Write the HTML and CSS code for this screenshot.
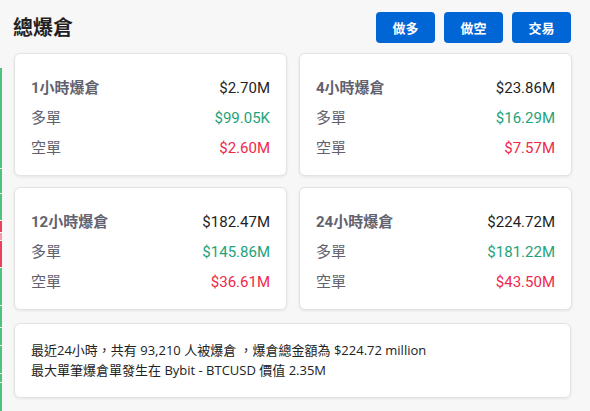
FILE: index.html
```html
<!DOCTYPE html>
<html lang="zh-Hant">
<head>
<meta charset="utf-8">
<title>總爆倉</title>
<link rel="stylesheet" href="styles.css">
</head>
<body>
<div class="edge">
  <span class="seg g" style="height:100px"></span>
  <span class="seg g" style="height:24px"></span>
  <span class="seg g" style="height:26px"></span>
  <span class="seg r" style="height:11px"></span>
  <span class="seg p" style="height:7px"></span>
  <span class="seg r" style="height:26px"></span>
  <span class="seg g" style="height:37px"></span>
  <span class="seg g" style="height:21px"></span>
  <span class="seg g" style="height:17px"></span>
  <span class="seg g" style="height:27px"></span>
  <span class="seg g" style="height:8px"></span>
  <span class="seg g" style="height:28px"></span>
</div>
<div class="page">
  <header class="header">
    <h1 class="title">總爆倉</h1>
    <div class="actions">
      <button class="btn">做多</button>
      <button class="btn">做空</button>
      <button class="btn">交易</button>
    </div>
  </header>
  <section class="grid">
    <div class="card">
      <div class="row"><span class="label strong">1小時爆倉</span><span class="val">$2.70M</span></div>
      <div class="row"><span class="label">多單</span><span class="val up">$99.05K</span></div>
      <div class="row"><span class="label">空單</span><span class="val down">$2.60M</span></div>
    </div>
    <div class="card">
      <div class="row"><span class="label strong">4小時爆倉</span><span class="val">$23.86M</span></div>
      <div class="row"><span class="label">多單</span><span class="val up">$16.29M</span></div>
      <div class="row"><span class="label">空單</span><span class="val down">$7.57M</span></div>
    </div>
    <div class="card">
      <div class="row"><span class="label strong">12小時爆倉</span><span class="val">$182.47M</span></div>
      <div class="row"><span class="label">多單</span><span class="val up">$145.86M</span></div>
      <div class="row"><span class="label">空單</span><span class="val down">$36.61M</span></div>
    </div>
    <div class="card">
      <div class="row"><span class="label strong">24小時爆倉</span><span class="val">$224.72M</span></div>
      <div class="row"><span class="label">多單</span><span class="val up">$181.22M</span></div>
      <div class="row"><span class="label">空單</span><span class="val down">$43.50M</span></div>
    </div>
  </section>
  <section class="summary">
    <p>最近24小時，共有 93,210 人被爆倉 ，爆倉總金額為 $224.72 million</p>
    <p>最大單筆爆倉單發生在 Bybit - BTCUSD 價值 2.35M</p>
  </section>
</div>
</body>
</html>
```
FILE: styles.css
```css
html, body {
  margin: 0;
  padding: 0;
  background: #f7f7f7;
  font-family: "Roboto", "Noto Sans CJK TC", sans-serif;
}

body {
  position: relative;
  width: 590px;
  height: 411px;
  overflow: hidden;
}

.edge {
  position: absolute;
  left: 0;
  top: 68px;
  width: 2px;
  display: flex;
  flex-direction: column;
  gap: 1px;
}

.seg { display: block; width: 2px; }
.seg.g { background: #4fc27c; }
.seg.r { background: #ef3e5c; }
.seg.p { background: #f29aaa; }

.page {
  padding: 12px 19px 0 14px;
}

.header {
  display: flex;
  justify-content: space-between;
  align-items: flex-start;
  height: 41px;
}

.title {
  margin: 3px 0 0 -1px;
  font-size: 20px;
  font-weight: 700;
  color: #1f1f24;
  line-height: 26px;
}

.actions {
  display: flex;
  gap: 9px;
}

.btn {
  width: 59px;
  height: 31px;
  border: none;
  border-radius: 4px;
  background: #0066d6;
  color: #fff;
  font-family: "Noto Sans CJK TC", sans-serif;
  font-size: 13px;
  font-weight: 700;
  padding: 0;
}

.grid {
  display: grid;
  grid-template-columns: 273px 273px;
  column-gap: 12px;
  row-gap: 11px;
}

.card {
  background: #fff;
  border: 1px solid #e3e3e3;
  border-radius: 6px;
  box-shadow: 0 1px 3px rgba(0,0,0,0.08);
  height: 123px;
  box-sizing: border-box;
  padding: 19px 16px 0 16px;
}

.row {
  display: flex;
  justify-content: space-between;
  align-items: baseline;
  height: 30px;
  line-height: 30px;
  font-size: 15px;
}

.label {
  color: #62626f;
}

.label.strong {
  font-weight: 700;
}

.val { color: #1f1f24; }
.val.up { color: #1ea37a; }
.val.down { color: #f0284a; }

.summary {
  margin-top: 13px;
  background: #fff;
  border: 1px solid #e3e3e3;
  border-radius: 6px;
  box-shadow: 0 1px 3px rgba(0,0,0,0.08);
  height: 75px;
  box-sizing: border-box;
  padding: 16px 16px 0 16px;
}

.summary p {
  margin: 0;
  font-family: "Open Sans", "Noto Sans CJK TC", sans-serif;
  font-size: 13px;
  line-height: 20px;
  color: #222;
}
```
